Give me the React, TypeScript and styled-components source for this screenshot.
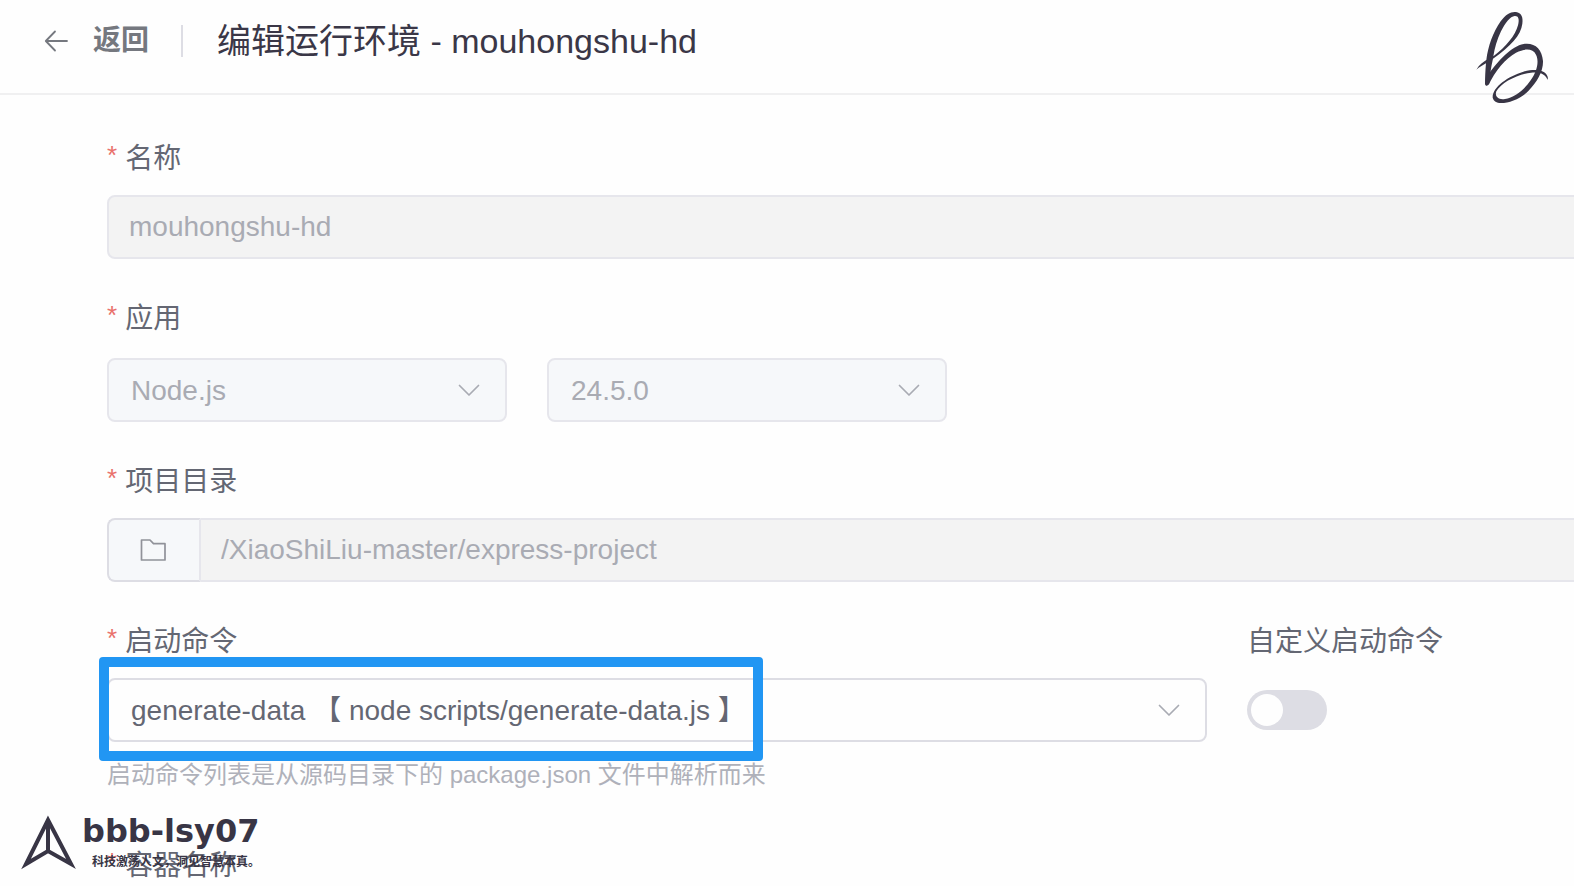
import React from "react";
import styled, { createGlobalStyle } from "styled-components";

const color = {
  ink: "#383545",
  title: "#3a3747",
  regular: "#646773",
  secondary: "#75787f",
  placeholder: "#a9abb3",
  hint: "#afb1ba",
  border: "#dddde4",
  borderLight: "#e6e6ec",
  fill: "#f6f8fa",
  disabled: "#f3f3f3",
  danger: "#e9716c",
  highlight: "#2196f3",
};

const GlobalStyle = createGlobalStyle`
  *, *::before, *::after { box-sizing: border-box; }
  body {
    margin: 0;
    background: #fefefe;
    color: ${color.regular};
    font-family: "Liberation Sans", "Noto Sans CJK SC", sans-serif;
    font-size: 28px;
  }
  button, input, select { font: inherit; }
`;

const Page = styled.div`
  position: relative;
  height: 100vh;
  overflow: hidden;
`;

const Header = styled.header`
  display: flex;
  align-items: center;
  height: 95px;
  padding: 0 44px 12px;
  border-bottom: 2px solid #f0f0f1;
`;

const BackButton = styled.button`
  display: flex;
  align-items: center;
  gap: 24px;
  padding: 0;
  border: 0;
  background: none;
  color: ${color.secondary};
  font-weight: 700;
  line-height: 40px;
  cursor: pointer;
`;

const Divider = styled.span`
  width: 2px;
  height: 32px;
  margin: 0 34px 0 32px;
  background: ${color.border};
`;

const Title = styled.h1`
  margin: 0;
  color: ${color.title};
  font-size: 34px;
  font-weight: 400;
  line-height: 48px;
`;

const Form = styled.form`
  display: flex;
  flex-direction: column;
  gap: 36px;
  margin-right: -13px;
  padding: 40px 0 0 107px;
`;

const Field = styled.div`
  display: flex;
  flex-direction: column;
  gap: 16px;
  min-width: 0;
`;

const Label = styled.label<{ $required?: boolean }>`
  padding-top: 4px;
  line-height: 40px;
  white-space: nowrap;
  &::before {
    content: "*";
    display: ${(p) => (p.$required ? "inline-block" : "none")};
    margin-right: 8px;
    color: ${color.danger};
    font-size: 26px;
    line-height: 32px;
    vertical-align: top;
  }
`;

const TextInput = styled.input`
  width: 100%;
  height: 64px;
  min-width: 0;
  padding: 0 20px;
  border: 2px solid ${color.borderLight};
  border-radius: 8px;
  background: ${color.disabled};
  color: ${color.placeholder};
`;

const InputGroup = styled.div`
  display: flex;
  ${TextInput} {
    border-left: 0;
    border-radius: 0 8px 8px 0;
  }
`;

const FolderButton = styled.button`
  display: grid;
  place-items: center;
  flex: none;
  width: 94px;
  height: 64px;
  padding: 0 2px 0 0;
  border: 2px solid ${color.border};
  border-right-color: ${color.borderLight};
  border-radius: 8px 0 0 8px;
  background: ${color.fill};
  color: #909299;
`;

const SelectRow = styled.div`
  display: flex;
  gap: 40px;
  padding-top: 3px;
`;

const SelectBox = styled.div<{ $fixed?: boolean }>`
  display: grid;
  grid-template-columns: minmax(0, 1fr);
  align-items: center;
  width: ${(p) => (p.$fixed ? "400px" : "100%")};
  color: ${color.placeholder};
  > * {
    grid-area: 1 / 1;
  }
  > svg {
    justify-self: end;
    margin-right: 24px;
    pointer-events: none;
  }
`;

const Select = styled.select`
  appearance: none;
  width: 100%;
  height: 64px;
  padding: 0 60px 0 22px;
  border: 2px solid ${color.border};
  border-radius: 8px;
  background: #fefefe;
  color: ${color.regular};
  &:disabled {
    border-color: ${color.borderLight};
    background: ${color.fill};
    color: ${color.placeholder};
    opacity: 1;
  }
`;

const CommandRow = styled.div`
  display: grid;
  grid-template-columns: repeat(4, minmax(0, 1fr));
  column-gap: 40px;
  > :first-child {
    grid-column: span 3;
  }
`;

const CommandBox = styled.div`
  position: relative;
`;

const Highlight = styled.div`
  position: absolute;
  top: -21px;
  left: -8px;
  width: 664px;
  height: 104px;
  border: 10px solid ${color.highlight};
  border-radius: 4px;
  pointer-events: none;
`;

const Hint = styled.p`
  margin: 0 0 16px;
  padding-top: 2px;
  color: ${color.hint};
  font-size: 24px;
  line-height: 30px;
`;

const Switch = styled.input`
  appearance: none;
  display: flex;
  align-items: center;
  width: 80px;
  height: 40px;
  margin: 12px 0;
  padding: 4px;
  border-radius: 20px;
  background: ${color.border};
  &::before {
    content: "";
    width: 32px;
    height: 32px;
    border-radius: 50%;
    background: #fefefe;
  }
  &:checked {
    justify-content: flex-end;
    background: ${color.highlight};
  }
`;

const ScriptLogo = styled.svg`
  position: absolute;
  top: 0;
  right: 0;
`;

const Watermark = styled.div`
  position: absolute;
  bottom: 14px;
  left: 20px;
  display: flex;
  align-items: center;
  gap: 6px;
  color: ${color.ink};
  white-space: nowrap;
`;

const WatermarkName = styled.div`
  margin-bottom: 4px;
  font-family: "DejaVu Sans", sans-serif;
  font-size: 32px;
  font-weight: 700;
  line-height: 32px;
`;

const WatermarkTagline = styled.div`
  padding-left: 10px;
  font-family: "Noto Sans CJK SC", sans-serif;
  font-size: 12px;
  font-weight: 700;
  line-height: 20px;
`;

const Chevron = () => (
  <svg width="28" height="28" viewBox="0 0 28 28" fill="none" stroke="currentColor" strokeWidth="1.7" strokeLinecap="round" strokeLinejoin="round" aria-hidden="true">
    <path d="M4.5 9.5 14 19l9.5-9.5" />
  </svg>
);

const BackIcon = () => (
  <svg width="25" height="24" viewBox="0 0 25 24" fill="none" stroke="currentColor" strokeWidth="1.8" strokeLinecap="round" strokeLinejoin="round" aria-hidden="true">
    <path d="M23 12H2M11 2.5 1.8 12l9.2 9.5" />
  </svg>
);

const FolderIcon = () => (
  <svg width="28" height="28" viewBox="0 0 28 28" fill="none" stroke="currentColor" strokeWidth="1.7" strokeLinejoin="round" aria-hidden="true">
    <path d="M2.500 4h8.500l3.500 3.700H26V24H2.500Z" />
  </svg>
);

export default function App() {
  return (
    <Page>
      <GlobalStyle />
      <Header>
        <BackButton type="button">
          <BackIcon />
          返回
        </BackButton>
        <Divider />
        <Title>编辑运行环境 - mouhongshu-hd</Title>
      </Header>

      <Form>
        <Field>
          <Label $required htmlFor="name">名称</Label>
          <TextInput id="name" disabled defaultValue="mouhongshu-hd" />
        </Field>

        <Field>
          <Label $required htmlFor="app">应用</Label>
          <SelectRow>
            <SelectBox $fixed>
              <Select id="app" disabled>
                <option>Node.js</option>
              </Select>
              <Chevron />
            </SelectBox>
            <SelectBox $fixed>
              <Select aria-label="版本" disabled>
                <option>24.5.0</option>
              </Select>
              <Chevron />
            </SelectBox>
          </SelectRow>
        </Field>

        <Field>
          <Label $required htmlFor="dir">项目目录</Label>
          <InputGroup>
            <FolderButton type="button" aria-label="选择目录">
              <FolderIcon />
            </FolderButton>
            <TextInput id="dir" disabled defaultValue="/XiaoShiLiu-master/express-project" />
          </InputGroup>
        </Field>

        <CommandRow>
          <Field>
            <Label $required htmlFor="command">启动命令</Label>
            <CommandBox>
              <SelectBox>
                <Select id="command">
                  <option>generate-data 【 node scripts/generate-data.js 】</option>
                </Select>
                <Chevron />
              </SelectBox>
              <Highlight />
            </CommandBox>
            <Hint>启动命令列表是从源码目录下的 package.json 文件中解析而来</Hint>
          </Field>
          <Field>
            <Label htmlFor="custom">自定义启动命令</Label>
            <Switch id="custom" type="checkbox" role="switch" />
          </Field>
        </CommandRow>

        <Field>
          <Label $required htmlFor="container">容器名称</Label>
          <TextInput id="container" />
        </Field>
      </Form>

      <ScriptLogo width="114" height="120" viewBox="0 0 342 360" fill={color.ink} aria-hidden="true">
        <path
          fillRule="evenodd"
          d="M49 209C58 194 69 187 79 180C84 139 99 97 122 64C137 42 154 34 168 36C184 38 190 52 187 71C183 106 151 139 99 176C96 190 91 210 88 250C84 260 76 259 75 252C75 235 76 212 78 190C68 196 58 201 49 209ZM100 169C139 140 166 106 174 76C179 57 175 47 164 48C151 49 136 68 123 94C111 119 104 144 100 169Z"
        />
        <path d="M85 224C113 183 155 138 191 132C224 127 246 147 249 183C250 213 232 246 205 273C180 298 143 311 118 309C106 308 99 300 98 292L107 280C108 293 118 300 135 297C163 292 192 270 212 241C231 214 238 184 228 164C219 146 196 144 168 158C137 175 105 213 85 256Z" />
        <path d="M98 292C98 260 145 229 190 215C225 206 254 209 262 228C264 232 264 236 262 239C258 223 240 215 213 218C170 224 124 248 109 274C107 281 106 288 108 293Z" />
      </ScriptLogo>

      <Watermark>
        <svg width="56" height="58" viewBox="0 0 56 58" fill="none" stroke={color.ink} strokeWidth="4" strokeMiterlimit="10" aria-hidden="true">
          <path d="M28 6 6 50 28 37 51 50ZM28 6V37" />
        </svg>
        <div>
          <WatermarkName>bbb-lsy07</WatermarkName>
          <WatermarkTagline>科技激荡人文，洞见智慧本真。</WatermarkTagline>
        </div>
      </Watermark>
    </Page>
  );
}
